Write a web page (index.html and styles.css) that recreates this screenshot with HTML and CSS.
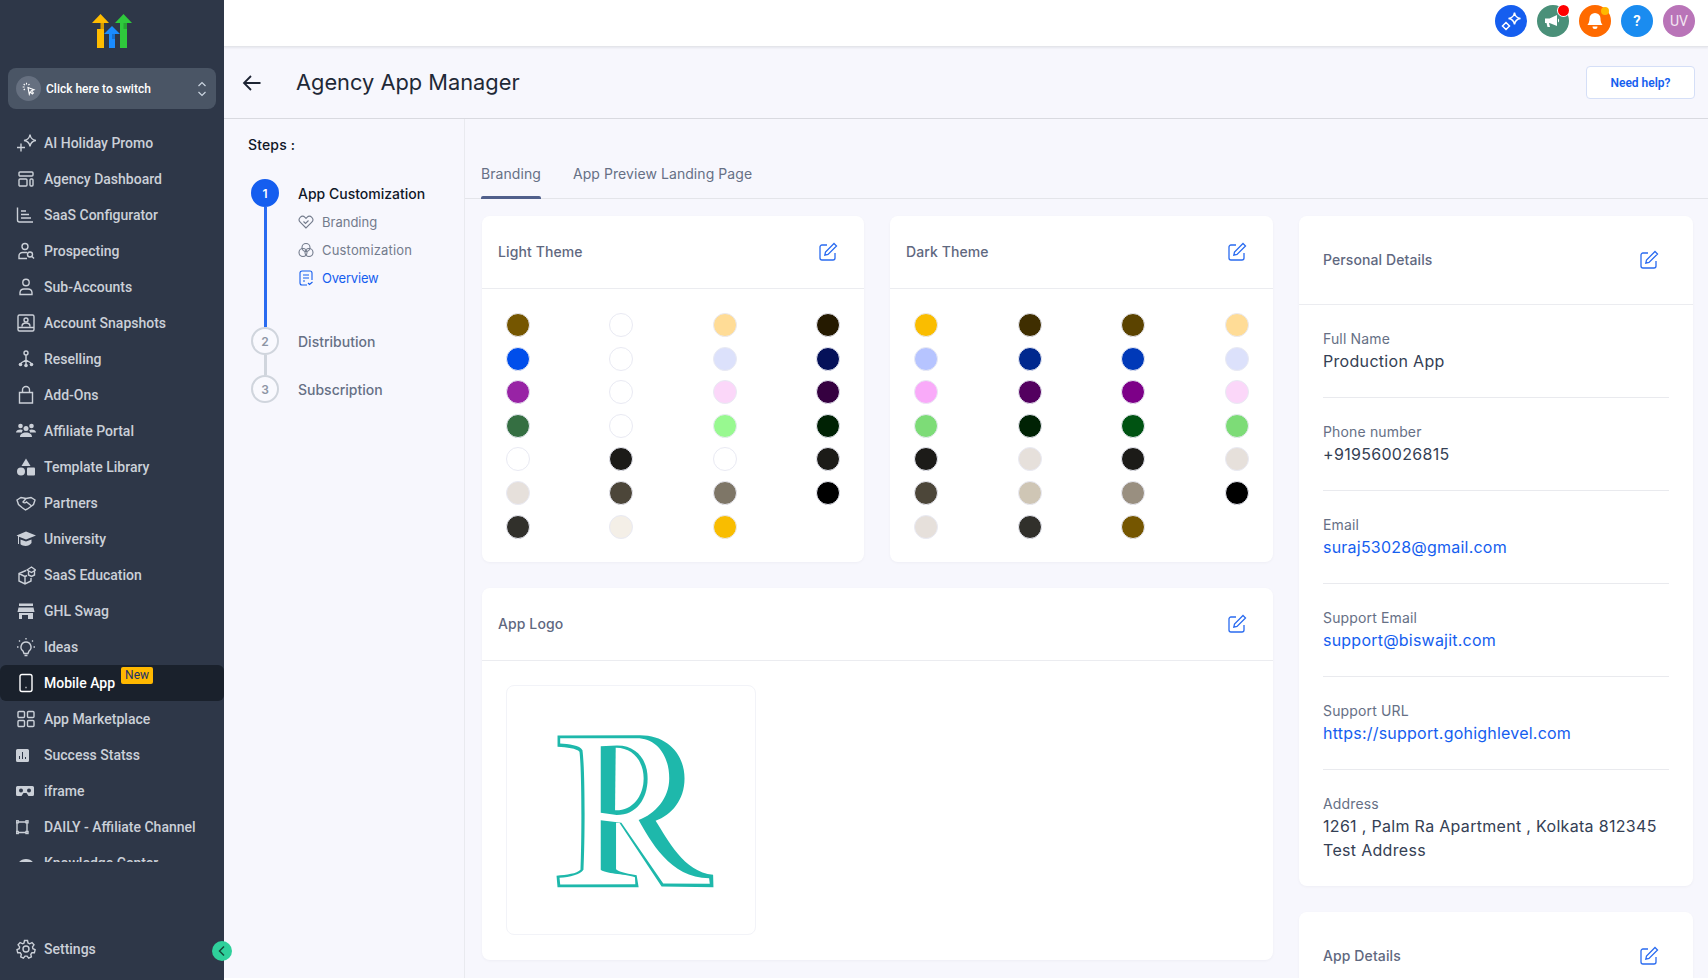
FILE: index.html
```html
<!DOCTYPE html>
<html lang="en">
<head>
<meta charset="utf-8">
<title>Agency App Manager</title>
<link rel="stylesheet" href="styles.css">
</head>
<body>
<div class="app">
  <aside class="sidebar">
    <div class="logo">
      <svg width="42" height="38" viewBox="0 0 42 38">
        <path fill="#ffbc00" d="M6 16h7v19H6z"/><path fill="#ffbc00" d="M1 10 9.500 1 18 10z"/><path fill="#d99f00" d="M9.500 10H13v6H9.500z"/>
        <path fill="#2fc93c" d="M29 10h7v25h-7z"/><path fill="#2fc93c" d="M24 10 32.500 1 41 10z"/><path fill="#26a632" d="M32.500 10H36v6h-3.500z"/>
        <path fill="#1a8cff" d="M18 21h6v14h-6z"/><path fill="#1a8cff" d="M13 21l8-8 8 8z"/><path fill="#1570d0" d="M21 21h3v5h-3z"/>
      </svg>
    </div>
    <div class="switcher">
      <span class="switch-icon">
        <svg width="14" height="14" viewBox="0 0 14 14" fill="none" stroke="#fff" stroke-width="1.100"><path d="M6 5.500l6 2.300-2.600 1 2 2.200-1.100 1-2-2.200-1 2.500z"/><path d="M4.500.8v1.800M1.700 2l1.200 1.200M.7 5h1.800M1.700 8l1.200-1.200M7.500 2 6.400 3.200"/></svg>
      </span>
      <span class="switch-label">Click here to switch</span>
      <svg class="switch-chev" width="10" height="16" viewBox="0 0 10 16" fill="none" stroke="#cbd5e0" stroke-width="1.200"><path d="M1.500 5 5 1.500 8.500 5M1.500 11 5 14.500 8.500 11"/></svg>
    </div>
    <nav class="nav">
      <a class="nav-item"><svg class="ic" viewBox="0 0 20 20"><path d="M14 1.500C14.500 5 16 7 20 7.500 16 8 14.500 10 14 13.500 13.500 10 12 8 8 7.500 12 7 13.500 5 14 1.500zM5 10.500v8M1 14.500h8"/></svg>AI Holiday Promo</a>
      <a class="nav-item"><svg class="ic" viewBox="0 0 20 20"><rect x="3" y="3" width="14" height="4" rx="1"/><rect x="3" y="10" width="8" height="7" rx="1"/><rect x="14" y="10" width="3" height="7" rx="1"/></svg>Agency Dashboard</a>
      <a class="nav-item"><svg class="ic" viewBox="0 0 20 20"><path d="M1.500 2.500V15a2 2 0 0 0 2 2h13.500M5 6h5M5 9.500h8M5 13h10"/></svg>SaaS Configurator</a>
      <a class="nav-item"><svg class="ic" viewBox="0 0 20 20"><circle cx="9" cy="5.500" r="3"/><path d="M11 11.500H6.500A3.500 3.500 0 0 0 3 15v2.500h8"/><circle cx="14" cy="13.500" r="2.500"/><path d="m16 15.500 2 2"/></svg>Prospecting</a>
      <a class="nav-item"><svg class="ic" viewBox="0 0 20 20"><circle cx="10" cy="5.500" r="3.200"/><path d="M4 17.500v-2a4 4 0 0 1 4-3.500h4a4 4 0 0 1 4 3.500v2z"/></svg>Sub-Accounts</a>
      <a class="nav-item"><svg class="ic" viewBox="0 0 20 20"><rect x="2" y="2" width="16" height="16" rx="1.500"/><path d="M2 14.500h16M6 13.500c0-2.500 2-3.500 4-3.500s4 1 4 3.500"/><circle cx="10" cy="7" r="2"/></svg>Account Snapshots</a>
      <a class="nav-item"><svg class="ic" viewBox="0 0 20 20"><circle cx="10" cy="4" r="2"/><path d="M10 6v5M10 11l-5 3M10 11l5 3M10 11v4"/><circle class="fill" cx="4.500" cy="15.500" r="1.800"/><circle class="fill" cx="10" cy="16.500" r="1.800"/><circle class="fill" cx="15.500" cy="15.500" r="1.800"/></svg>Reselling</a>
      <a class="nav-item"><svg class="ic" viewBox="0 0 20 20"><path d="M3.500 7.500h13V18h-13zM6.500 7.500V5a3.500 3.500 0 0 1 7 0v2.500"/></svg>Add-Ons</a>
      <a class="nav-item"><svg class="ic solid" viewBox="0 0 20 20"><circle cx="4.500" cy="5" r="2.300"/><circle cx="15.500" cy="5" r="2.300"/><circle cx="10" cy="7.500" r="2.500"/><path d="M0 11.500c0-2 2-3 4.500-3 1 0 1.700.2 2.300.6A4 4 0 0 0 6 11.500zM20 11.500c0-2-2-3-4.500-3-1 0-1.700.2-2.300.6a4 4 0 0 1 .8 2.400zM4 16c0-3 2.500-4.500 6-4.500s6 1.500 6 4.500z"/></svg>Affiliate Portal</a>
      <a class="nav-item"><svg class="ic solid" viewBox="0 0 20 20"><path d="M10 1.500l4.500 7.500h-9z"/><circle cx="5" cy="14.500" r="4"/><rect x="11" y="10.500" width="8" height="8" rx="1"/></svg>Template Library</a>
      <a class="nav-item"><svg class="ic" viewBox="0 0 20 20"><path d="M1 7l4-2.500 5 1 5-1 4 2.500-1.500 4.500-6 4.500-2 1-3.500-2.500-3.500-3zM10 5.500 7 9c1 1.200 2.500 1 3.500 0l4.500 3.500"/></svg>Partners</a>
      <a class="nav-item"><svg class="ic solid" viewBox="0 0 20 20"><path d="M10 2.500 20 6.500l-10 4-7-2.800V15H2V7.200L0.500 6.500zM4.500 10.500l5.500 2 5.500-2V14c-1.500 2-3.500 3-6 3-2 0-3.700-.6-5-1.700z"/></svg>University</a>
      <a class="nav-item"><svg class="ic" viewBox="0 0 20 20"><path d="M10 5.500 3 8.500v7.500l6 3 6-3v-3M3 8.500l6 3v7.500M9 11.500l2-1"/><path d="M11 5l4.500-3 4 3-4 2.500zM12.500 6.500V10l3 1.500 3-1.500V6"/></svg>SaaS Education</a>
      <a class="nav-item"><svg class="ic solid" viewBox="0 0 20 20"><rect x="3" y="2.500" width="14" height="2.500"/><path d="M2.500 6.500h15l1 4.500H1.500zM3 12h14v6h-5v-4H6v4H3z"/></svg>GHL Swag</a>
      <a class="nav-item"><svg class="ic" viewBox="0 0 20 20"><path d="M10 5a5 5 0 0 0-3 9l1 2.500h4l1-2.500a5 5 0 0 0-3-9zM8.500 18.500h3M10 1v1.500M3 3.500 4 4.500M17 3.500l-1 1M1 10h1.500M17.500 10H19"/></svg>Ideas</a>
      <a class="nav-item active"><svg class="ic" viewBox="0 0 20 20"><rect x="4" y="1.500" width="12" height="17" rx="2"/><path d="M9.500 14.500h1"/></svg>Mobile App<span class="badge">New</span></a>
      <a class="nav-item"><svg class="ic" viewBox="0 0 20 20"><rect x="2" y="2.500" width="6.500" height="6" rx="1"/><rect x="11.500" y="2.500" width="6.500" height="6" rx="1"/><rect x="2" y="11.500" width="6.500" height="6" rx="1"/><rect x="11.500" y="11.500" width="6.500" height="6" rx="1"/></svg>App Marketplace</a>
      <a class="nav-item"><svg class="ic" viewBox="0 0 20 20"><path class="solid-path" d="M1.500 4h10A1.500 1.500 0 0 1 13 5.500v10a1.500 1.500 0 0 1-1.500 1.500h-10A1.500 1.500 0 0 1 0 15.500v-10A1.500 1.500 0 0 1 1.500 4zM4 14v-3H3v3zM7 14V7H6v7zM10 14v-2H9v2z"/></svg>Success Statss</a>
      <a class="nav-item"><svg class="ic" viewBox="0 0 20 20"><path class="solid-path" d="M1.500 5h15A1.500 1.500 0 0 1 18 6.500v7a1.500 1.500 0 0 1-1.500 1.500h-4L10.500 12h-3l-2 3h-4A1.500 1.500 0 0 1 0 13.500v-7A1.500 1.500 0 0 1 1.500 5zM5 7.500a2 2 0 1 0 0 4 2 2 0 0 0 0-4zM13 7.500a2 2 0 1 0 0 4 2 2 0 0 0 0-4z"/></svg>iframe</a>
      <a class="nav-item"><svg class="ic" viewBox="0 0 20 20"><path d="M2 5h8M2 15.500h8M1 6v8.500M11 6v8.500"/><rect x=".2" y="3.800" width="2" height="2"/><rect x="10" y="3.800" width="2" height="2"/><rect x=".2" y="14.500" width="2" height="2"/><rect x="10" y="14.500" width="2" height="2"/></svg>DAILY - Affiliate Channel</a>
      <a class="nav-item"><svg class="ic solid" viewBox="0 0 20 20"><path d="M2 13c0-5 4-7 8-7s8 2 8 7z"/></svg>Knowledge Center</a>
    </nav>
    <a class="nav-item settings"><svg class="ic" viewBox="0 0 20 20"><circle cx="10" cy="10" r="3"/><path d="M8.500 1.500h3l.5 2.500 1.700.8 2.300-1.200 2 2.300-1.500 2 .4 1.800 2.200 1-.7 3-2.500.1-1.100 1.500.6 2.500-2.700 1.300-1.600-2H9l-1.600 2-2.700-1.300.6-2.500-1.100-1.500-2.500-.1-.7-3 2.200-1 .4-1.800-1.500-2 2-2.300L6.800 4.800 8 4z"/></svg>Settings</a>
    <button class="collapse" type="button" aria-label="Collapse"><svg width="10" height="12" viewBox="0 0 10 12" fill="none" stroke="#14493a" stroke-width="1.500"><path d="M7 1.500 2.500 6 7 10.500"/></svg></button>
  </aside>

  <div class="main">
    <header class="topbar">
      <span class="round blue"><svg width="20" height="20" viewBox="0 0 20 20" fill="none" stroke="#fff" stroke-width="1.500"><path d="M13.500 1.500C14 5 15.500 7 19.500 7.500 15.500 8 14 10 13.500 13.500 13 10 11.500 8 7.500 7.500 11.500 7 13 5 13.500 1.500zM5 11.500 8.500 15 5 18.500 1.500 15z"/></svg></span>
      <span class="round green"><svg width="20" height="20" viewBox="0 0 20 20" fill="#fff"><path d="M2 7.500h4.500L14 4v11L6.500 12H6l1 4H4.500L3.500 12H2z"/><path d="M15 7.500c1.500.5 1.500 3.500 0 4z"/></svg><i class="dot red"></i></span>
      <span class="round orange"><svg width="20" height="20" viewBox="0 0 20 20" fill="#fff"><path d="M10 2a5.500 5.500 0 0 0-5.500 5.500c0 4-1.500 5.500-2 6.500h15c-.5-1-2-2.500-2-6.500A5.500 5.500 0 0 0 10 2zM7.500 15.500h5a2.500 2.500 0 0 1-5 0z"/></svg><i class="dot amber"></i></span>
      <span class="round sky">?</span>
      <span class="round purple">UV</span>
    </header>
    <div class="pagehead">
      <svg class="back" width="20" height="20" viewBox="0 0 20 20" fill="none" stroke="#1d2433" stroke-width="1.800"><path d="M18.500 10H2M9 3l-7 7 7 7"/></svg>
      <h1 class="title">Agency App Manager</h1>
      <a class="help">Need help?</a>
    </div>
    <div class="body">
      <aside class="steps">
        <div class="steps-title">Steps :</div>
        <div class="step one">
          <div class="rail"><span class="num on">1</span><span class="line on"></span></div>
          <div class="step-text">
            <div class="step-name on">App Customization</div>
            <div class="sub"><svg class="sub-ic" viewBox="0 0 16 16"><path d="M8 14 2.200 8.200a3.400 3.400 0 0 1 0-4.800 3.400 3.400 0 0 1 4.800 0l1 1 1-1a3.400 3.400 0 0 1 4.800 0 3.400 3.400 0 0 1 0 4.800z"/><path d="m5.500 7.500 2 2 3-3"/></svg>Branding</div>
            <div class="sub spaced"><svg class="sub-ic" viewBox="0 0 16 16"><circle cx="8" cy="5.500" r="4"/><circle cx="5" cy="10.500" r="4"/><circle cx="11" cy="10.500" r="4"/></svg>Customization</div>
            <div class="sub cur"><svg class="sub-ic" viewBox="0 0 16 16"><path d="M9 15H4a2 2 0 0 1-2-2V3a2 2 0 0 1 2-2h8a2 2 0 0 1 2 2v7M5 5h6M5 8h6M5 11h2M10 13l1.500 1.500L14.500 12"/></svg>Overview</div>
          </div>
        </div>
        <div class="step two">
          <div class="rail"><span class="num">2</span><span class="line"></span></div>
          <div class="step-text"><div class="step-name">Distribution</div></div>
        </div>
        <div class="step">
          <div class="rail"><span class="num">3</span></div>
          <div class="step-text"><div class="step-name">Subscription</div></div>
        </div>
      </aside>
      <section class="content">
        <div class="tabs">
          <a class="tab active">Branding</a>
          <a class="tab">App Preview Landing Page</a>
        </div>
        <div class="columns">
          <div class="left">
            <div class="themes">
              <div class="card">
                <div class="card-head"><span class="card-title">Light Theme</span><svg class="edit" viewBox="0 0 20 20"><path d="M9 3H4a2 2 0 0 0-2 2v11a2 2 0 0 0 2 2h11a2 2 0 0 0 2-2v-5"/><path d="M16 1.500 18.500 4 10 12.500l-3.200.7.700-3.200z"/></svg></div>
                <div class="swatches">
                  <i style="background:#755600"></i><i style="background:#fff"></i><i style="background:#ffdc96"></i><i style="background:#251a00"></i>
                  <i style="background:#004eeb"></i><i style="background:#fff"></i><i style="background:#dce1fb"></i><i style="background:#051159"></i>
                  <i style="background:#9823a5"></i><i style="background:#fff"></i><i style="background:#fbd7f9"></i><i style="background:#350040"></i>
                  <i style="background:#356f42"></i><i style="background:#fff"></i><i style="background:#98f990"></i><i style="background:#002204"></i>
                  <i style="background:#fff"></i><i style="background:#1c1b18"></i><i style="background:#fff"></i><i style="background:#1c1b18"></i>
                  <i style="background:#e6e0db"></i><i style="background:#4c4639"></i><i style="background:#7e7667"></i><i style="background:#000"></i>
                  <i style="background:#31302b"></i><i style="background:#f4efe7"></i><i style="background:#f9bd00"></i>
                </div>
              </div>
              <div class="card">
                <div class="card-head"><span class="card-title">Dark Theme</span><svg class="edit" viewBox="0 0 20 20"><path d="M9 3H4a2 2 0 0 0-2 2v11a2 2 0 0 0 2 2h11a2 2 0 0 0 2-2v-5"/><path d="M16 1.500 18.500 4 10 12.500l-3.200.7.700-3.200z"/></svg></div>
                <div class="swatches">
                  <i style="background:#fabd00"></i><i style="background:#3f2e00"></i><i style="background:#5b4300"></i><i style="background:#ffdc96"></i>
                  <i style="background:#b6c4ff"></i><i style="background:#00288e"></i><i style="background:#0039b8"></i><i style="background:#dce1fb"></i>
                  <i style="background:#f9aaf9"></i><i style="background:#53005f"></i><i style="background:#7d0088"></i><i style="background:#fbd7f9"></i>
                  <i style="background:#7ddc77"></i><i style="background:#002204"></i><i style="background:#005312"></i><i style="background:#7ddc77"></i>
                  <i style="background:#1c1b18"></i><i style="background:#e6e0db"></i><i style="background:#1c1b18"></i><i style="background:#e6e0db"></i>
                  <i style="background:#4c4639"></i><i style="background:#cfc6b5"></i><i style="background:#998f80"></i><i style="background:#000"></i>
                  <i style="background:#e6e0db"></i><i style="background:#31302b"></i><i style="background:#755600"></i>
                </div>
              </div>
            </div>
            <div class="card logo-card">
              <div class="card-head"><span class="card-title">App Logo</span><svg class="edit" viewBox="0 0 20 20"><path d="M9 3H4a2 2 0 0 0-2 2v11a2 2 0 0 0 2 2h11a2 2 0 0 0 2-2v-5"/><path d="M16 1.500 18.500 4 10 12.500l-3.200.7.700-3.200z"/></svg></div>
              <div class="logo-body">
                <div class="logo-box">
                  <svg width="248" height="248" viewBox="80 47 746 746" role="img" aria-label="App logo">
                    <path fill="#1eb8ab" d="M232 196 480 195C565 195 614 255 614 325 614 390 575 435 527 452 565 510 610 605 700 615L701 652 545 650 418 458H408V598C420 608 450 612 470 616L476 652H232L229 618C260 615 290 612 301 600 305 500 305 300 298 245 290 235 260 232 232 230Z"/>
                    <path fill="#fff" d="M240 204H470C530 204 568 255 568 325 568 385 525 432 476 450 510 510 570 625 688 625L690 642 550 641 424 458 362 451V600C375 612 430 612 465 622L466 643 240 644 238 624C270 622 300 615 310 600 315 500 315 300 307 240 300 225 265 222 240 220Z"/>
                    <path fill="#1eb8ab" d="M362 228 410 226C470 225 503 270 503 325 503 385 470 435 410 435L362 428Z"/>
                    <path fill="#fff" d="M407 233C455 232 491 270 491 325 491 380 455 423 405 421Z"/>
                  </svg>
                </div>
              </div>
            </div>
          </div>
          <div class="right">
            <div class="card">
              <div class="card-head tall"><span class="card-title">Personal Details</span><svg class="edit" viewBox="0 0 20 20"><path d="M9 3H4a2 2 0 0 0-2 2v11a2 2 0 0 0 2 2h11a2 2 0 0 0 2-2v-5"/><path d="M16 1.500 18.500 4 10 12.500l-3.200.7.700-3.200z"/></svg></div>
              <div class="fields">
                <div class="field"><div class="f-label">Full Name</div><div class="f-value">Production App</div></div>
                <div class="field"><div class="f-label">Phone number</div><div class="f-value">+919560026815</div></div>
                <div class="field"><div class="f-label">Email</div><div class="f-value link">suraj53028@gmail.com</div></div>
                <div class="field"><div class="f-label">Support Email</div><div class="f-value link">support@biswajit.com</div></div>
                <div class="field"><div class="f-label">Support URL</div><div class="f-value link">https://support.gohighlevel.com</div></div>
                <div class="field"><div class="f-label">Address</div><div class="f-value">1261 , Palm Ra Apartment , Kolkata 812345<br>Test Address</div></div>
              </div>
            </div>
            <div class="card">
              <div class="card-head tall"><span class="card-title">App Details</span><svg class="edit" viewBox="0 0 20 20"><path d="M9 3H4a2 2 0 0 0-2 2v11a2 2 0 0 0 2 2h11a2 2 0 0 0 2-2v-5"/><path d="M16 1.500 18.500 4 10 12.500l-3.200.7.700-3.200z"/></svg></div>
            </div>
          </div>
        </div>
      </section>
    </div>
  </div>
</div>
</body>
</html>
```

FILE: styles.css
```css
* { box-sizing: border-box; }
html, body { margin: 0; height: 100%; overflow: hidden; }
body { font-family: Inter, "Liberation Sans", sans-serif; background: #fff; color: #344054; }
.app { display: flex; height: 980px; }

/* Sidebar */
.sidebar { position: relative; width: 224px; flex: none; background: #2e3748; display: flex; flex-direction: column; font-family: Roboto, "Liberation Sans", sans-serif; }
.logo { height: 68px; display: flex; justify-content: center; padding-top: 13px; }
.switcher { margin: 0 8px; height: 41px; border-radius: 8px; background: #4a5565; display: flex; align-items: center; padding: 0 9px 0 8px; }
.switch-icon { width: 25px; height: 25px; border-radius: 50%; background: #667080; display: flex; align-items: center; justify-content: center; flex: none; }
.switch-label { margin-left: 5px; font-size: 12px; font-weight: 500; color: #fff; flex: 1; white-space: nowrap; }
.switch-chev { flex: none; }
.nav { margin-top: 16px; flex: 1; overflow: hidden; margin-bottom: 69px; }
.nav-item { display: flex; align-items: center; height: 36px; padding-left: 16px; font-size: 14px; font-weight: 500; color: #cbd0d8; white-space: nowrap; }
.nav-item.active { background: #1a212c; color: #fff; border-radius: 6px; }
.ic { width: 20px; height: 20px; flex: none; margin-right: 8px; fill: none; stroke: currentColor; stroke-width: 1.400; }
.ic .fill { fill: currentColor; stroke: none; }
.ic.solid { fill: currentColor; stroke: none; }
.ic .solid-path { fill: currentColor; stroke: none; fill-rule: evenodd; }
.badge { align-self: flex-start; margin: 2px 0 0 6px; height: 17px; padding: 0 4px; background: #ffb800; color: #1b2f6b; font-size: 12px; line-height: 16px; border-radius: 2px; font-weight: 400; }
.settings { margin-bottom: 13px; flex: none; }
.collapse { position: absolute; left: 212px; top: 941px; width: 20px; height: 20px; border: 0; padding: 0; border-radius: 50%; background: #2fd09b; display: flex; align-items: center; justify-content: center; }

/* Main */
.main { flex: 1; min-width: 0; height: 978px; overflow: hidden; background: #f7f7fd; display: flex; flex-direction: column; }
.topbar { height: 47px; flex: none; background: #fff; border-bottom: 1px solid #e4e5ea; box-shadow: 0 1px 2px rgba(16, 24, 40, .08); display: flex; align-items: center; justify-content: flex-end; gap: 10px; padding: 0 13px 5px 0; }
.round { position: relative; width: 32px; height: 32px; border-radius: 50%; display: flex; align-items: center; justify-content: center; color: #fff; font-size: 14px; font-family: Roboto, "Liberation Sans", sans-serif; }
.blue { background: #155eef; }
.green { background: #4a9079; }
.orange { background: #ff6a00; }
.sky { background: #1a8cf0; font-weight: 600; font-size: 15px; }
.purple { background: #b974b8; color: #f3e6f2; font-size: 14px; }
.dot { position: absolute; border-radius: 50%; }
.dot.red { width: 11px; height: 11px; background: #f00; border: 0; right: 0; top: 0; box-shadow: 0 0 0 1px #fff; }
.dot.amber { width: 8px; height: 8px; background: #ffb800; right: 2px; top: 2px; }
.pagehead { height: 72px; flex: none; display: flex; align-items: center; padding: 0 13px 0 18px; border-bottom: 1px solid #d9dae0; }
.back { flex: none; }
.title { margin: 0 0 2px 34px; font-size: 21.800px; line-height: 30px; font-weight: 400; color: #1f2937; flex: 1; }
.help { width: 109px; height: 33px; border: 1px solid #d5dff7; border-radius: 4px; background: #fff; color: #155eef; font-family: Roboto, "Liberation Sans", sans-serif; font-size: 12px; font-weight: 600; display: flex; align-items: center; justify-content: center; }
.body { flex: 1; display: flex; min-height: 0; }

/* Steps */
.steps { width: 241px; flex: none; border-right: 1px solid #e9eaef; padding: 16px 0 0 24px; }
.steps-title { font-size: 14px; line-height: 20px; font-weight: 500; letter-spacing: .15px; color: #101828; margin-bottom: 24px; }
.step { display: flex; margin-left: 3px; gap: 19px; }
.step.one { height: 148px; }
.step.two { height: 48px; }
.rail { width: 28px; display: flex; flex-direction: column; align-items: center; flex: none; }
.num { width: 28px; height: 28px; flex: none; border-radius: 50%; border: 2px solid #d0d5dd; color: #8d95a5; font-size: 12px; font-weight: 600; display: flex; align-items: center; justify-content: center; background: #f9f9fe; }
.num.on { background: #155eef; border-color: #155eef; color: #fff; }
.line { width: 3px; flex: 1; background: #d0d5dd; }
.line.on { background: #2a6bf0; }
.step-text { padding-top: 1px; }
.step-name { font-size: 14px; line-height: 28px; font-weight: 500; color: #667085; white-space: nowrap; }
.step-name.on { color: #101828; }
.sub { display: flex; align-items: center; height: 28px; font-size: 13px; color: #737b8c; }
.sub.spaced { letter-spacing: .18px; }
.sub-ic { width: 16px; height: 16px; margin-right: 8px; fill: none; stroke: currentColor; stroke-width: 1.100; flex: none; }
.sub.cur { color: #155eef; letter-spacing: -.2px; }

/* Content */
.content { flex: 1; min-width: 0; }
.tabs { height: 80px; display: flex; align-items: flex-end; border-bottom: 1px solid #e4e5ea; padding-left: 16px; gap: 32px; }
.tab { position: relative; height: 39px; font-size: 14px; line-height: 29px; letter-spacing: .07px; color: #667085; }
.tab.active::after { content: ""; position: absolute; left: 0; right: 0; bottom: -1px; height: 3px; border-radius: 2px 2px 0 0; background: #51608c; }
.columns { display: flex; gap: 26px; padding: 17px 15px 0 17px; }
.left { width: 791px; flex: none; display: flex; flex-direction: column; gap: 26px; }
.themes { display: grid; grid-template-columns: 382px 383px; gap: 26px; }
.right { width: 394px; flex: none; display: flex; flex-direction: column; gap: 26px; }
.card { background: #fff; border-radius: 8px; box-shadow: 0 1px 3px rgba(16, 24, 40, .04); }
.card-head { height: 73px; display: flex; align-items: center; justify-content: space-between; padding: 0 26px 0 16px; border-bottom: 1px solid #ebecf0; }
.card-head.tall { height: 89px; padding: 0 34px 0 24px; }
.card-title { font-size: 14px; font-weight: 500; color: #5f6880; letter-spacing: .1px; margin-bottom: 2px; }
.edit { width: 20px; height: 20px; fill: none; stroke: #2a6bf0; stroke-width: 1.300; flex: none; }
.swatches { display: grid; grid-template-columns: repeat(4, 24px); justify-content: space-between; grid-auto-rows: 33.600px; padding: 24px 24px 15px; height: 273px; }
.swatches i { width: 24px; height: 24px; border-radius: 50%; border: 1px solid #e9eaf3; }
.logo-card { height: 372px; }
.logo-body { padding: 24px; }
.logo-box { width: 250px; height: 250px; border: 1px solid #f2f3f8; border-radius: 8px; }
.logo-box svg { display: block; }
.fields { padding: 0 24px; }
.field { padding: 24px 0; border-bottom: 1px solid #e9eaee; }
.field:last-child { border-bottom: 0; }
.f-label { font-size: 14px; line-height: 20px; color: #667085; letter-spacing: .15px; }
.f-value { font-size: 16px; line-height: 24px; color: #344054; letter-spacing: .31px; }
.f-value.link { color: #155eef; letter-spacing: .22px; }
```
